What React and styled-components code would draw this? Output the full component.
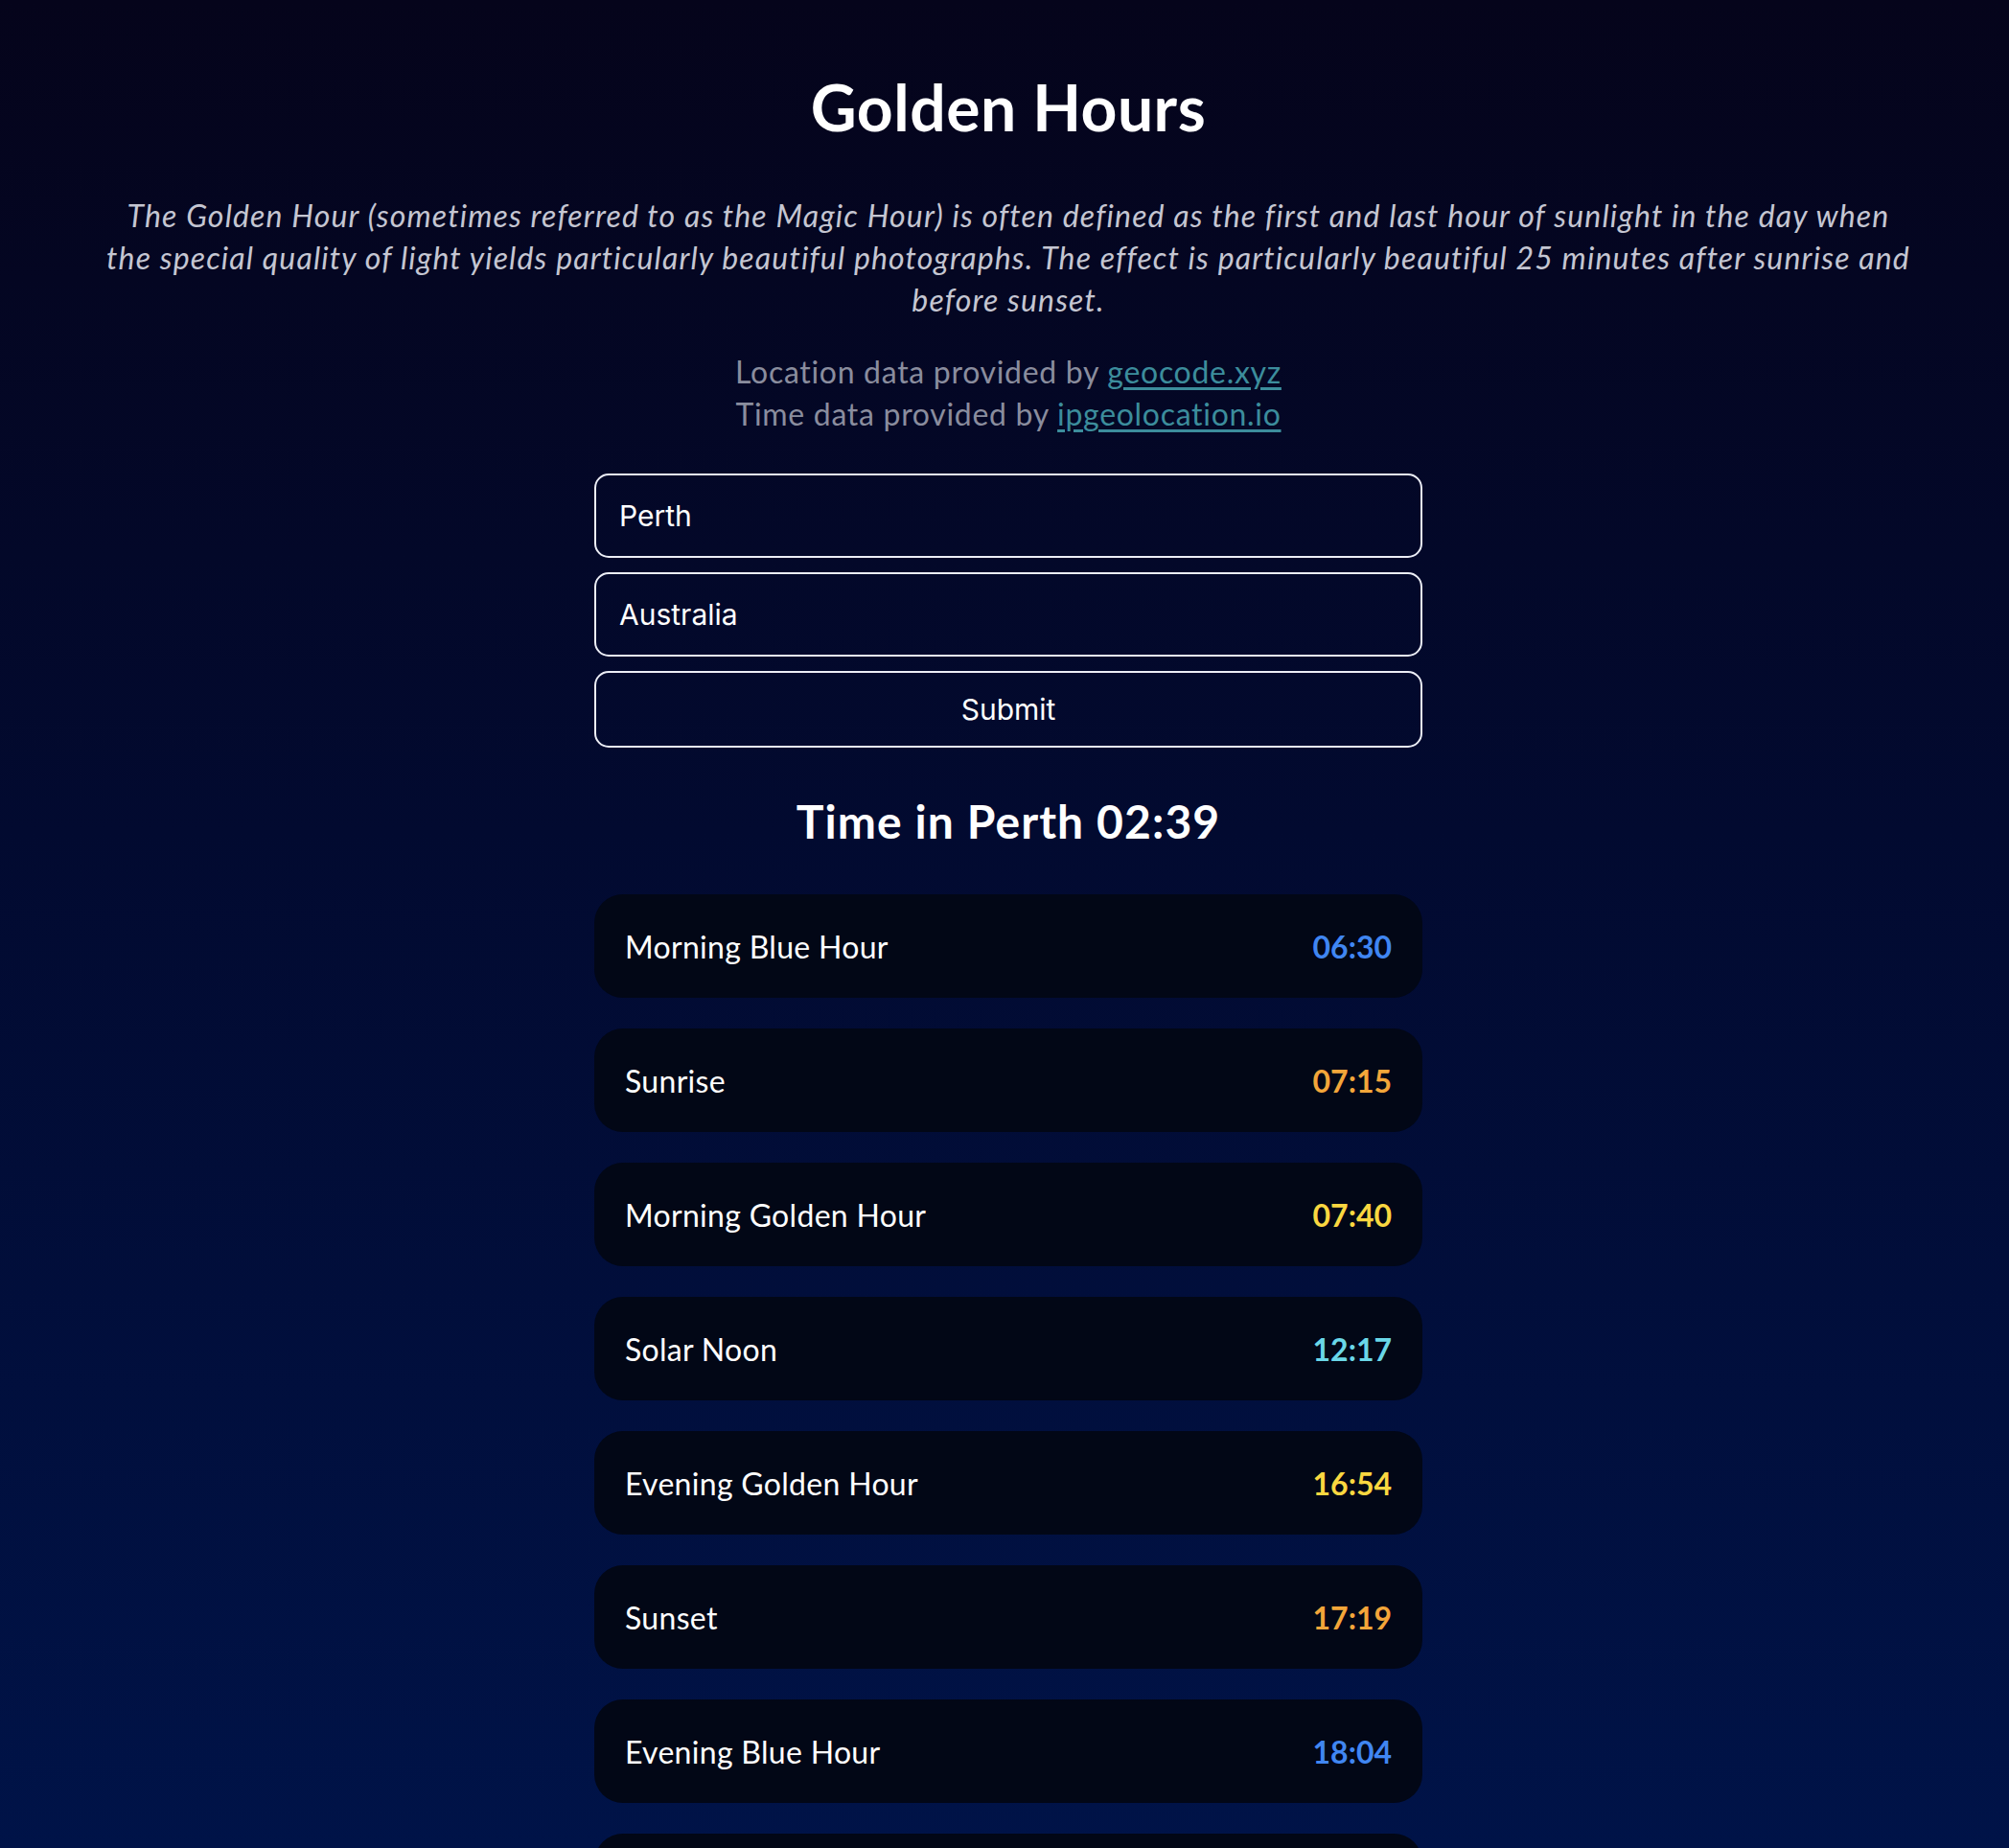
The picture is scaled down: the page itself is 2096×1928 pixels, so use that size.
import React from "react";
import styled, { createGlobalStyle } from "styled-components";

const GlobalStyle = createGlobalStyle`
  html, body {
    margin: 0;
    padding: 0;
  }
  html {
    background: linear-gradient(180deg, #05041b 0%, #020a30 45%, #001348 100%) fixed;
    min-height: 100%;
  }
  body {
    font-family: "Lato", "Noto Sans", sans-serif;
    color: #ffffff;
  }
`;

const Page = styled.main`
  display: flex;
  flex-direction: column;
  align-items: center;
  padding: 80px 0 40px 8px;
  box-sizing: border-box;
`;

const Title = styled.h1`
  margin: 0;
  font-size: 66px;
  line-height: 64px;
  font-weight: 700;
  letter-spacing: 0.5px;
  color: #ffffff;
`;

const Intro = styled.p`
  margin: 59px 0 0;
  max-width: 1990px;
  font-size: 32px;
  line-height: 44px;
  letter-spacing: 1.15px;
  font-style: italic;
  text-align: center;
  color: #c5c6d2;
`;

const Credits = styled.div`
  margin-top: 31px;
  font-size: 32px;
  line-height: 44px;
  letter-spacing: 0.7px;
  text-align: center;
  color: #8a8d9e;
`;

const CreditLink = styled.a`
  color: #3c8d9c;
  text-decoration: underline;
  text-underline-offset: 4px;
`;

const Form = styled.form`
  margin-top: 40px;
  width: 864px;
  display: flex;
  flex-direction: column;
  gap: 15px;
`;

const Field = styled.input`
  box-sizing: border-box;
  height: 88px;
  width: 100%;
  padding: 0 24px;
  border: 2px solid #eceef6;
  border-radius: 15px;
  background: transparent;
  color: #ffffff;
  font-family: "Inter", "Roboto", sans-serif;
  font-size: 30px;
  outline: none;
`;

const SubmitButton = styled.button`
  box-sizing: border-box;
  height: 80px;
  width: 100%;
  border: 2px solid #eceef6;
  border-radius: 15px;
  background: transparent;
  color: #ffffff;
  font-family: "Inter", "Roboto", sans-serif;
  font-size: 30px;
  cursor: pointer;
`;

const LocalTime = styled.h2`
  margin: 53px 0 0;
  font-size: 48px;
  line-height: 48px;
  font-weight: 700;
  letter-spacing: 1.1px;
  color: #ffffff;
`;

const List = styled.ul`
  list-style: none;
  margin: 52px 0 0;
  padding: 0;
  width: 864px;
  display: flex;
  flex-direction: column;
  gap: 32px;
`;

const Row = styled.li`
  box-sizing: border-box;
  height: 108px;
  padding: 0 32px;
  border-radius: 30px;
  background: #020716;
  display: flex;
  align-items: center;
  justify-content: space-between;
`;

const Label = styled.span`
  font-size: 32px;
  letter-spacing: 0.3px;
  color: #ffffff;
`;

const Time = styled.span`
  font-size: 32px;
  font-weight: 700;
  color: ${(p) => p.$color};
`;

const COLORS = {
  blue: "#4086f2",
  orange: "#f3a63a",
  yellow: "#fad740",
  cyan: "#6ad7e8",
};

const EVENTS = [
  { label: "Morning Blue Hour", time: "06:30", color: COLORS.blue },
  { label: "Sunrise", time: "07:15", color: COLORS.orange },
  { label: "Morning Golden Hour", time: "07:40", color: COLORS.yellow },
  { label: "Solar Noon", time: "12:17", color: COLORS.cyan },
  { label: "Evening Golden Hour", time: "16:54", color: COLORS.yellow },
  { label: "Sunset", time: "17:19", color: COLORS.orange },
  { label: "Evening Blue Hour", time: "18:04", color: COLORS.blue },
  { label: "Night", time: "18:34", color: COLORS.blue },
];

export default function App() {
  return (
    <>
      <GlobalStyle />
      <Page>
        <Title>Golden Hours</Title>
        <Intro>
          The Golden Hour (sometimes referred to as the Magic Hour) is often defined as the first
          and last hour of sunlight in the day when
          <br />
          the special quality of light yields particularly beautiful photographs. The effect is
          particularly beautiful 25 minutes after sunrise and
          <br />
          before sunset.
        </Intro>
        <Credits>
          Location data provided by <CreditLink href="#">geocode.xyz</CreditLink>
          <br />
          Time data provided by <CreditLink href="#">ipgeolocation.io</CreditLink>
        </Credits>
        <Form onSubmit={(e) => e.preventDefault()}>
          <Field defaultValue="Perth" />
          <Field defaultValue="Australia" />
          <SubmitButton type="submit">Submit</SubmitButton>
        </Form>
        <LocalTime>Time in Perth 02:39</LocalTime>
        <List>
          {EVENTS.map((ev) => (
            <Row key={ev.label}>
              <Label>{ev.label}</Label>
              <Time $color={ev.color}>{ev.time}</Time>
            </Row>
          ))}
        </List>
      </Page>
    </>
  );
}
